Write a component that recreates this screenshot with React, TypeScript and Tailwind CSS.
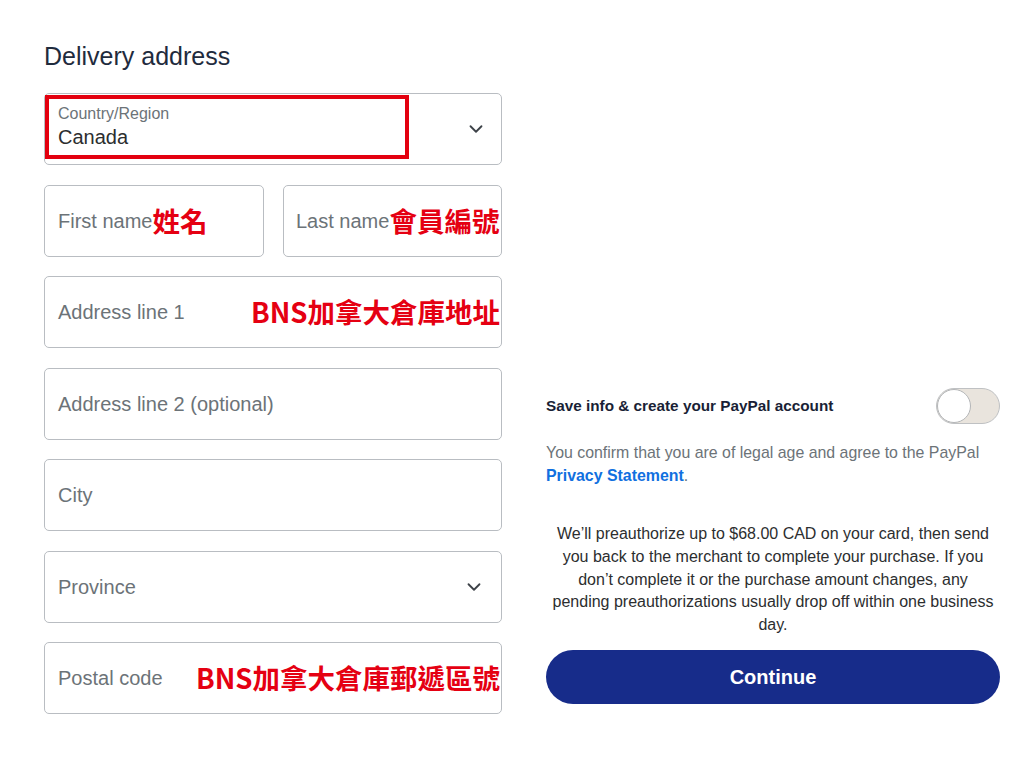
import { ChevronDown } from "lucide-react";

const sans = "font-['Liberation_Sans','Helvetica','Arial',sans-serif]";
const cjk = "font-['Noto_Sans_CJK_TC','Noto_Sans_CJK_SC',sans-serif]";

function Note({ children }: { children: React.ReactNode }) {
  return (
    <span className={`${cjk} text-[27.5px] font-bold leading-none text-[#e50012] whitespace-nowrap`}>
      {children}
    </span>
  );
}

function Field({
  placeholder,
  note,
  noteRight = false,
  select = false,
}: {
  placeholder: string;
  note?: string;
  noteRight?: boolean;
  select?: boolean;
}) {
  return (
    <div
      className={`h-[72px] border border-[#b9bdc2] rounded-[5px] flex items-center pl-[13px] ${
        noteRight ? "justify-between pr-[1px]" : "pr-[16px]"
      } ${select ? "justify-between pr-[14px]" : ""}`}
    >
      <div className="flex items-center">
        <span className="text-[20px] text-[#6c7378] whitespace-nowrap">{placeholder}</span>
        {note && !noteRight && <Note>{note}</Note>}
      </div>
      {note && noteRight && <Note>{note}</Note>}
      {select && <ChevronDown className="w-[22px] h-[22px] text-[#3d4248]" strokeWidth={2} />}
    </div>
  );
}

export default function App() {
  return (
    <div className={`${sans} w-[1024px] h-[768px] bg-white flex gap-[44px] pl-[44px] overflow-hidden`}>
      {/* left: address form */}
      <div className="w-[458px] pt-[41px] flex flex-col">
        <h2 className="text-[25px] leading-[30px] text-[#1f2b3d] mb-[22px]">Delivery address</h2>

        <div className="flex flex-col gap-[19.5px]">
          <div className="relative h-[72px] border border-[#b9bdc2] rounded-[5px] flex items-center justify-between pl-[13px] pr-[14px]">
            <div className="self-start pt-[10px] flex flex-col">
              <span className="text-[16px] leading-[19px] mb-[2px] text-[#6c7378]">Country/Region</span>
              <span className="text-[20px] leading-[25px] text-[#2c2e2f]">Canada</span>
            </div>
            <ChevronDown className="w-[22px] h-[22px] text-[#3d4248]" strokeWidth={2} />
            <div className="absolute left-0 top-[1px] w-[364px] h-[64px] border-[4px] border-[#e3000f]" />
          </div>

          <div className="flex gap-[19px]">
            <div className="w-[220px]">
              <Field placeholder="First name" note="姓名" />
            </div>
            <div className="w-[219px]">
              <div className="h-[72px] border border-[#b9bdc2] rounded-[5px] flex items-center pl-[12px] overflow-visible">
                <span className="text-[20px] text-[#6c7378] whitespace-nowrap">Last name</span>
                <Note>會員編號</Note>
              </div>
            </div>
          </div>

          <Field placeholder="Address line 1" note="BNS加拿大倉庫地址" noteRight />
          <Field placeholder="Address line 2 (optional)" />
          <Field placeholder="City" />
          <Field placeholder="Province" select />
          <Field placeholder="Postal code" note="BNS加拿大倉庫郵遞區號" noteRight />
        </div>
      </div>

      {/* right: paypal account + continue */}
      <div className="w-[454px] pt-[388px] flex flex-col">
        <div className="flex items-center justify-between h-[36px]">
          <span className="text-[15.3px] font-bold text-[#1a1f36]">Save info &amp; create your PayPal account</span>
          <div className="w-[64px] h-[36px] rounded-full bg-[#e9e4dd] border border-[#bfc1c3] flex items-center">
            <div className="w-[34px] h-[34px] rounded-full bg-white border-[1.5px] border-[#b4b6b8]" />
          </div>
        </div>

        <p className="mt-[17px] text-[15.9px] leading-[23px] text-[#6c7378]">
          You confirm that you are of legal age and agree to the PayPal
          <br />
          <span className="font-bold text-[#1170e0]">Privacy Statement</span>.
        </p>

        <p className="mt-[36px] text-[16px] leading-[22.75px] text-[#2c2e2f] text-center">
          We’ll preauthorize up to $68.00 CAD on your card, then send
          <br />
          you back to the merchant to complete your purchase. If you
          <br />
          don’t complete it or the purchase amount changes, any
          <br />
          pending preauthorizations usually drop off within one business
          <br />
          day.
        </p>

        <button className="mt-[13px] h-[54px] w-full rounded-full bg-[#172c8a] text-white text-[20px] font-bold">
          Continue
        </button>
      </div>
    </div>
  );
}
